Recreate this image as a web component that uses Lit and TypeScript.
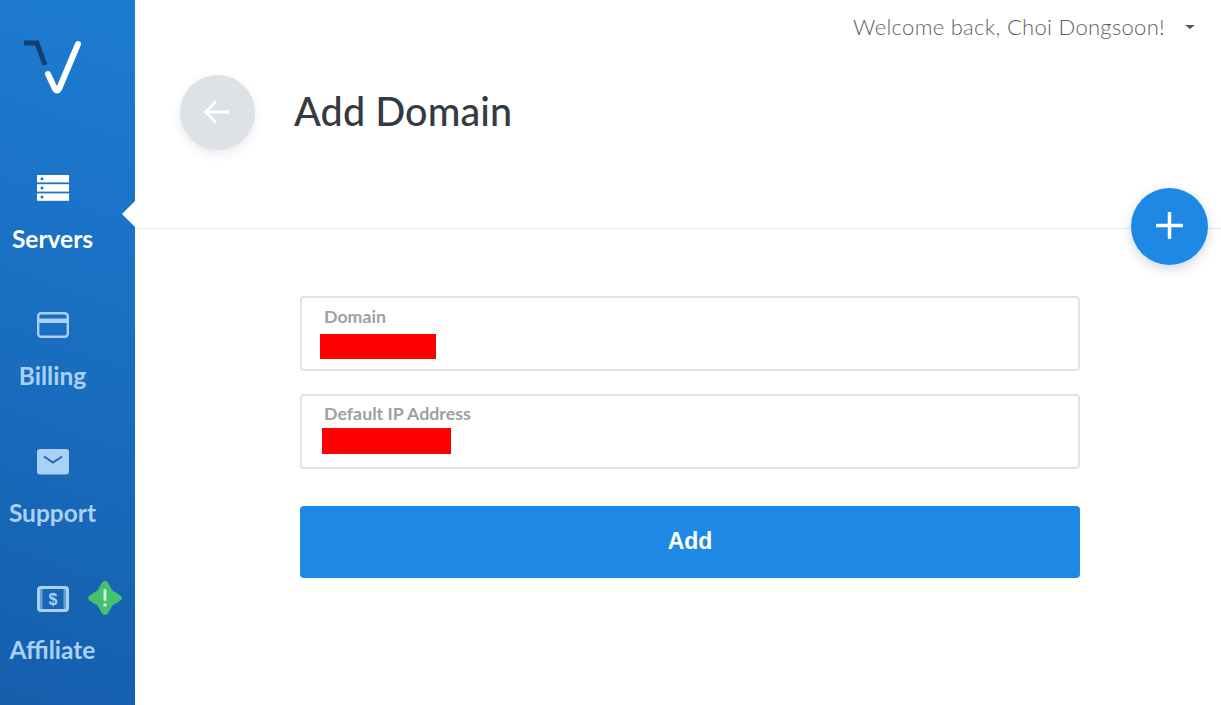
import { LitElement, html, css } from "lit";
import { customElement } from "lit/decorators.js";

const icons = {
  servers: html`<svg width="32" height="26" viewBox="0 0 32 26"><g fill="#fff"><rect x="0" y="0" width="32" height="7.4"/><rect x="0" y="9.2" width="32" height="7.4"/><rect x="0" y="18.4" width="32" height="7.4"/></g><g fill="#1b6fc2"><circle cx="5" cy="3.7" r="1.5"/><circle cx="5" cy="12.9" r="1.5"/><circle cx="5" cy="22.1" r="1.5"/></g></svg>`,
  billing: html`<svg width="32" height="26" viewBox="0 0 32 26"><rect x="1.2" y="1.2" width="29.6" height="23.6" rx="3" fill="none" stroke="currentColor" stroke-width="2.4"/><rect x="1.2" y="6.500" width="29.6" height="4.500" fill="currentColor"/></svg>`,
  support: html`<svg width="32" height="26" viewBox="0 0 32 26"><rect width="32" height="25.5" rx="3" fill="currentColor"/><path d="M7 7.500 16 13.500 25 7.500" fill="none" stroke="#1a69b9" stroke-width="2"/></svg>`,
  affiliate: html`<svg width="32" height="26" viewBox="0 0 32 26"><rect x="1.500" y="1.500" width="29" height="23" rx="2.500" fill="none" stroke="currentColor" stroke-width="3"/><rect x="4.500" y="4" width="23" height="18" fill="#1a65b4"/><rect x="3" y="3" width="2.500" height="20" fill="currentColor" opacity=".55"/><rect x="26.500" y="3" width="2.500" height="20" fill="currentColor" opacity=".55"/><text x="16" y="18.500" text-anchor="middle" font-family="Liberation Sans, sans-serif" font-size="16" font-weight="700" fill="currentColor">$</text></svg>`,
};

@customElement("nav-item")
class NavItem extends LitElement {
  static properties = { label: {}, active: { type: Boolean, reflect: true } };
  label = "";
  active = false;
  static styles = css`
    :host { display: flex; flex-direction: column; align-items: center; height: 137px; color: #a9d0f5; }
    :host([active]) { color: #fff; }
    .icon { height: 26px; display: flex; margin-bottom: 25px; }
    .label { font: 700 24.500px/26px Lato, "Open Sans", sans-serif; white-space: nowrap; }
  `;
  render() {
    return html`<div class="icon"><slot name="icon"></slot></div><div class="label">${this.label}</div>`;
  }
}

@customElement("app-root")
class AppRoot extends LitElement {
  static styles = css`
    :host { display: flex; width: 1221px; height: 705px; overflow: hidden; background: #fff; font-family: Lato, "Open Sans", sans-serif; position: relative; }
    .side { width: 135px; flex: none; position: relative; background: linear-gradient(20deg, #155eac 0%, #1a6fc2 55%, #1d7cd2 100%); box-sizing: border-box; padding-top: 40px; }
    .logo { display: block; margin: 0 0 81px 24px; }
    .notch { position: absolute; left: 122px; top: 201px; width: 0; height: 0; border-top: 13.5px solid transparent; border-bottom: 13.5px solid transparent; border-right: 13px solid #fff; }
    .badge { position: absolute; left: 88px; top: 581px; }
    .nav { display: flex; flex-direction: column; width: 105px; }
    .main { flex: 1; min-width: 0; position: relative; }
    .header { height: 229px; box-sizing: border-box; border-bottom: 1px solid #e9ecef; padding: 13px 0 0 45px; }
    .welcome { display: flex; justify-content: flex-end; align-items: center; height: 28px; padding-right: 26px; color: #5f5f5f; font-size: 22px; font-weight: 300; line-height: 28px; letter-spacing: 0.3px; }
    .caret { width: 0; height: 0; border-left: 5px solid transparent; border-right: 5px solid transparent; border-top: 4px solid #555; margin-left: 20px; }
    .title-row { display: flex; align-items: center; margin-top: 34px; }
    .back { width: 75px; height: 75px; border-radius: 50%; background: #dee2e6; box-shadow: 0 4px 10px rgba(60,80,110,.12); display: flex; align-items: center; justify-content: center; flex: none; padding-bottom: 2px; box-sizing: border-box; padding-right: 2px; }
    h1 { margin: -4px 0 0 39px; font-size: 39.5px; font-weight: 500; color: #343a40; line-height: 46px; letter-spacing: 0.1px; }
    .fab { position: absolute; left: 996px; top: 188px; width: 77px; height: 77px; border-radius: 50%; background: #1e88e5; box-shadow: 0 4px 12px rgba(30,60,110,.2); display: flex; align-items: center; justify-content: center; box-sizing: border-box; padding-bottom: 2px; }
    form { width: 780px; margin: 67px 0 0 165px; display: flex; flex-direction: column; }
    .field { height: 75px; box-sizing: border-box; border: 2px solid #e0e2e5; border-radius: 4px; padding: 8px 0 0 22px; margin-bottom: 23px; }
    .f2 { padding-top: 7px; }
    .field label { display: block; color: #a0a0a0; font-size: 17.800px; font-weight: 700; line-height: 20px; }
    .redact { background: #f00; }
    .r1 { width: 116px; height: 25px; margin: 8px 0 0 -4px; }
    .r2 { width: 129px; height: 26px; margin: 5px 0 0 -2px; }
    button { height: 72px; margin-top: 14px; border: 0; border-radius: 4px; background: #1e88e5; color: #fff; font: 700 23px "Liberation Sans", Arial, sans-serif; padding: 0 0 2px; }
  `;
  render() {
    return html`
      <aside class="side">
        <svg class="logo" width="58" height="54" viewBox="0 0 58 54">
          <path d="M0 3H13L21 25" fill="none" stroke="#143f6e" stroke-width="5"/>
          <path d="M24 34 31 49Q33 52 35 49L54 4" fill="none" stroke="#fff" stroke-width="6" stroke-linecap="round" stroke-linejoin="round"/>
        </svg>
        <div class="nav">
          <nav-item label="Servers" active><span slot="icon">${icons.servers}</span></nav-item>
          <nav-item label="Billing"><span slot="icon">${icons.billing}</span></nav-item>
          <nav-item label="Support"><span slot="icon">${icons.support}</span></nav-item>
          <nav-item label="Affiliate"><span slot="icon">${icons.affiliate}</span></nav-item>
        </div>
        <div class="notch"></div>
        <svg class="badge" width="34" height="34" viewBox="0 0 34 34">
          <path d="M17 0C20 0 22 5 24 9 26 11 34 14 34 17S26 23 24 25C22 29 20 34 17 34S12 29 10 25C8 23 0 20 0 17S8 11 10 9C12 5 14 0 17 0Z" fill="#45c16f"/>
          <rect x="15.600" y="8" width="2.800" height="12" rx="1.400" fill="#d8f5e2"/>
          <circle cx="17" cy="24" r="1.700" fill="#d8f5e2"/>
        </svg>
      </aside>
      <main class="main">
        <header class="header">
          <div class="welcome">Welcome back, Choi Dongsoon!<span class="caret"></span></div>
          <div class="title-row">
            <div class="back">
              <svg width="28" height="26" viewBox="0 0 28 26"><path d="M26 13H3M13 2.500 2.500 13 13 23.500" fill="none" stroke="#fff" stroke-width="3"/></svg>
            </div>
            <h1>Add Domain</h1>
          </div>
        </header>
        <div class="fab">
          <svg width="27" height="27" viewBox="0 0 27 27"><path d="M13.500 1V26M1 13.500H26" stroke="#fff" stroke-width="3.500" stroke-linecap="round"/></svg>
        </div>
        <form>
          <div class="field"><label>Domain</label><div class="redact r1"></div></div>
          <div class="field f2"><label>Default IP Address</label><div class="redact r2"></div></div>
          <button type="button">Add</button>
        </form>
      </main>
    `;
  }
}
